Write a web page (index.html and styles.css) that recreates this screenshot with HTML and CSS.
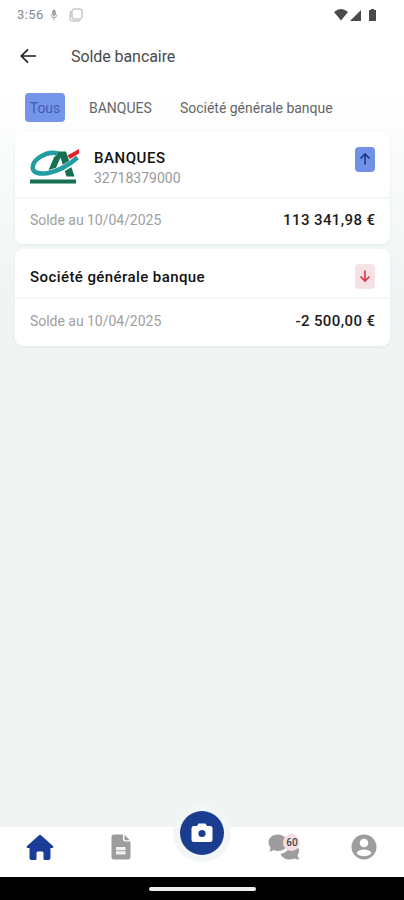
FILE: index.html
```html
<!DOCTYPE html>
<html lang="fr">
<head>
    <meta charset="UTF-8">
    <meta name="viewport" content="width=device-width, initial-scale=1.0">
    <title>Solde bancaire</title>
    <link rel="stylesheet" href="styles.css">
</head>
<body>
    <div class="screen">
        <div class="status-bar">
            <span class="time">3:56</span>
            <svg width="8" height="12" viewBox="0 0 8 12" fill="none" stroke="#999">
                <rect x="2.7" y="1" width="2.6" height="5.5" rx="1.3" fill="#aaa"/>
                <path d="M1 5.5c0 4 6 4 6 0M4 8.5V11"/>
            </svg>
            <svg class="copy" width="14" height="14" viewBox="0 0 14 14" fill="none" stroke="#aaa">
                <rect x="3" y="1" width="10" height="10" rx="2"/>
                <path d="M2 3C1 5 1 9 1 11.500Q1 13 2.500 13H9Q11 13 11.500 12"/>
            </svg>
            <svg class="signals" width="46" height="14" viewBox="0 0 46 14" fill="#4b4b4b">
                <path d="M1 4Q8 -2 15 4L8 12.500Z"/>
                <path d="M17 13 28 2V13Z"/>
                <path d="M36 2h2V1h3v1h2v11h-7Z"/>
            </svg>
        </div>

        <header class="header">
            <svg width="18" height="18" viewBox="0 0 18 18" fill="none" stroke="#222" stroke-width="1.7">
                <path d="M17 9H2.500M9 2.300 2.300 9 9 15.700"/>
            </svg>
            <h1>Solde bancaire</h1>
        </header>

        <nav class="tabs">
            <span class="tab-active">Tous</span>
            <span class="tab-bank">BANQUES</span>
            <span>Société générale banque</span>
        </nav>

        <main class="accounts">
            <section class="card">
                <div class="card-head card-head-logo">
                    <svg class="logo" width="51" height="36" viewBox="0 0 51 36" fill="none">
                        <path d="M17.500 23.500 26.500 2.500H36L44.500 27.500H36.500L30.500 8.500 24 23.500Z" fill="#15704f"/>
                        <path d="M26 4.500C14 1.500 1.500 11.500 2.600 20C4 29 28 26.500 48 9" stroke="#fff" stroke-width="6.500"/>
                        <path d="M28 4.600C16 1 1.800 11.500 2.800 19.500C4 28.500 28 26 47.500 8.500" stroke="#239da0" stroke-width="4.500"/>
                        <path d="M37.500 6.500 49 0V4.500L40 10Z" fill="#e5202b"/>
                        <path d="M0 30.500h46v4H0z" fill="#15704f"/>
                    </svg>
                    <div class="account">
                        <div class="account-name name-bank">BANQUES</div>
                        <div class="account-number">32718379000</div>
                    </div>
                    <span class="arrow arrow-up">
                        <svg width="12" height="14" viewBox="0 0 12 14"><path d="M6 12.500V2M1.500 6.500 6 2l4.500 4.500"/></svg>
                    </span>
                </div>
                <div class="card-balance balance-first">
                    <span class="date">Solde au 10/04/2025</span>
                    <span class="amount">113 341,98 €</span>
                </div>
            </section>

            <section class="card">
                <div class="card-head">
                    <div class="account">
                        <div class="account-name name-sg">Société générale banque</div>
                    </div>
                    <span class="arrow arrow-down">
                        <svg width="12" height="14" viewBox="0 0 12 14"><path d="M6 1.500V12M1.500 7.500 6 12l4.500-4.500"/></svg>
                    </span>
                </div>
                <div class="card-balance">
                    <span class="date">Solde au 10/04/2025</span>
                    <span class="amount">-2 500,00 €</span>
                </div>
            </section>
        </main>

        <footer class="bottom-nav">
            <span class="nav-item">
                <svg width="28" height="26" viewBox="0 0 28 26" fill="#1b3d98">
                    <path d="M13 1.300Q14 .5 15 1.300L27 12Q28 13.500 26.500 14H24.500V24Q24.500 26 22.500 26H18.500Q17.500 26 17.500 25V19Q17.500 17.500 16 17.500H12Q10.500 17.500 10.500 19V25Q10.500 26 9.500 26H5.500Q3.500 26 3.500 24V14H1.500Q0 13.500 1 12Z"/>
                </svg>
            </span>
            <span class="nav-item">
                <svg width="20" height="26" viewBox="0 0 20 26">
                    <path d="M3 .5H12V5.500Q12 7.500 14 7.500H19.500V23Q19.500 25.500 17 25.500H3Q.5 25.500 .5 23V3Q.5 .5 3 .5ZM13.500 .8 19 6.300H13.500Z" fill="#9d9d9d"/>
                    <path d="M5 13h9.500v3.200H5zM5 17.300h9.500v3.200H5z" fill="#f2f2f2"/>
                </svg>
            </span>
            <span class="nav-item">
                <span class="camera">
                    <svg width="22" height="20" viewBox="0 0 22 20">
                        <path d="M3 3H6L7.500 .5H14.500L16 3H19Q21.500 3 21.500 5V16.500Q21.500 19 19 19H3Q.5 19 .5 16.500V5Q.5 3 3 3Z" fill="#fff"/>
                        <circle cx="11" cy="10.500" r="3.600" fill="#1b3d90"/>
                    </svg>
                </span>
            </span>
            <span class="nav-item messages">
                <svg width="32" height="26" viewBox="0 0 32 26" fill="#9d9d9d">
                    <path d="M10 .5C15 .5 19 4 19 9S15 17 10 17Q7.500 17 5.500 16Q3.500 17.500 1 17.500Q2.500 15.500 2.500 13.500Q.5 11.500 .5 8.500C.5 4 4.500 .5 10 .5Z"/>
                    <path d="M12.500 20Q20 19 22 11L29 12Q31.500 15 31 18Q30.500 20 29.500 21Q29.500 23 31.500 25.500Q28 25.500 26.500 24.500C20 27 14.500 25 12.500 20Z"/>
                </svg>
                <span class="badge">60</span>
            </span>
            <span class="nav-item">
                <svg width="26" height="26" viewBox="0 0 26 26">
                    <circle cx="13" cy="13" r="12.500" fill="#9d9d9d"/>
                    <circle cx="13" cy="9" r="4.300" fill="#fff"/>
                    <path d="M5.500 19C7.500 14.300 18.500 14.300 20.500 19C17 23.300 9 23.300 5.500 19Z" fill="#fff"/>
                </svg>
            </span>
        </footer>
        <div class="system-bar"><span class="home-pill"></span></div>
    </div>
</body>
</html>
```
FILE: styles.css
```css
body {
    margin: 0;
    font-family: Roboto, sans-serif;
    color: #1c1c1c;
}
.screen {
    width: 404px;
    height: 900px;
    display: flex;
    flex-direction: column;
    overflow: hidden;
    background: linear-gradient(#fff 0, #fff 85px, #f0f5f4 290px);
}
svg {
    display: block;
    flex: none;
}
.status-bar {
    height: 29px;
    display: flex;
    align-items: center;
    padding: 0 25px 0 17px;
    box-sizing: border-box;
}
.time {
    width: 33px;
    font-size: 13px;
    letter-spacing: 0.4px;
    color: #888;
}
.copy {
    margin-left: 11px;
}
.signals {
    margin-left: auto;
}
.header {
    height: 55px;
    display: flex;
    align-items: center;
    padding: 0 0 2px 19px;
    box-sizing: border-box;
}
.header h1 {
    margin: 2px 0 0 34px;
    font-size: 16px;
    font-weight: 400;
    letter-spacing: -0.07px;
    color: #4a4a4a;
}
.tabs {
    display: flex;
    align-items: center;
    height: 29px;
    margin: 9px 0 0 25px;
    color: #666;
    font-size: 14px;
    letter-spacing: -0.02px;
    white-space: nowrap;
}
.tab-active {
    width: 40px;
    height: 29px;
    line-height: 30px;
    border-radius: 4px;
    background: #7595e9;
    color: #405db5;
    text-align: center;
}
.tab-bank {
    margin-left: 24px;
    width: 91px;
}
.accounts {
    flex: 1;
    display: flex;
    flex-direction: column;
    gap: 5px;
    padding: 10px 14px 0 15px;
}
.card {
    background: #fff;
    border-radius: 8px;
    box-shadow: 0 1px 3px rgba(190, 220, 216, 0.35);
}
.card-head {
    display: flex;
    align-items: center;
    height: 50px;
    padding: 5px 15px 0;
    box-sizing: border-box;
    border-bottom: 2px solid #f5f7f7;
}
.card-head-logo {
    height: 67px;
}
.account {
    flex: 1;
}
.logo {
    margin-right: 13px;
}
.account-name {
    font-size: 15px;
    font-weight: 500;
    line-height: 20px;
    color: #111;
}
.name-bank {
    padding-top: 2px;
    letter-spacing: 0.55px;
}
.name-sg {
    padding-top: 3px;
    letter-spacing: 0.42px;
}
.account-number {
    font-size: 14px;
    line-height: 20px;
    color: #999;
}
.arrow {
    width: 20px;
    height: 25px;
    display: flex;
    align-items: center;
    justify-content: center;
    border-radius: 4px;
}
.arrow path {
    fill: none;
    stroke: currentColor;
    stroke-width: 1.6;
}
.arrow-up {
    margin-bottom: 16px;
    background: #7191e8;
    color: #18388e;
}
.arrow-down {
    margin-top: 1px;
    background: #f6e2e5;
    color: #d23743;
}
.card-balance {
    display: flex;
    align-items: center;
    justify-content: space-between;
    height: 47px;
    padding: 0 15px 4px;
    box-sizing: border-box;
}
.balance-first {
    height: 45px;
}
.date {
    font-size: 14px;
    letter-spacing: -0.03px;
    color: #a0a0a0;
}
.amount {
    font-size: 15px;
    font-weight: 500;
    letter-spacing: 0.4px;
    margin-right: -0.4px;
}
.bottom-nav {
    height: 50px;
    display: grid;
    grid-template-columns: repeat(5, 1fr);
    background: #fff;
}
.nav-item {
    display: flex;
    justify-content: center;
    align-items: flex-start;
    padding-top: 7px;
}
.camera {
    flex: none;
    display: flex;
    align-items: center;
    justify-content: center;
    width: 44px;
    height: 44px;
    margin-top: -23px;
    border-radius: 50%;
    background: #1b3d90;
    box-shadow: 0 0 0 7px #f2f6f6;
}
.messages {
    position: relative;
}
.messages svg {
    margin-left: 2px;
}
.badge {
    position: absolute;
    left: 41px;
    top: 7px;
    width: 17px;
    height: 17px;
    border-radius: 50%;
    background: #f6dfe2;
    font-size: 10px;
    font-weight: 500;
    line-height: 17px;
    text-align: center;
    color: #444;
}
.system-bar {
    height: 23px;
    display: flex;
    justify-content: center;
    align-items: center;
    background: #000;
}
.home-pill {
    width: 107px;
    height: 4px;
    border-radius: 2px;
    background: #eee;
}
```
